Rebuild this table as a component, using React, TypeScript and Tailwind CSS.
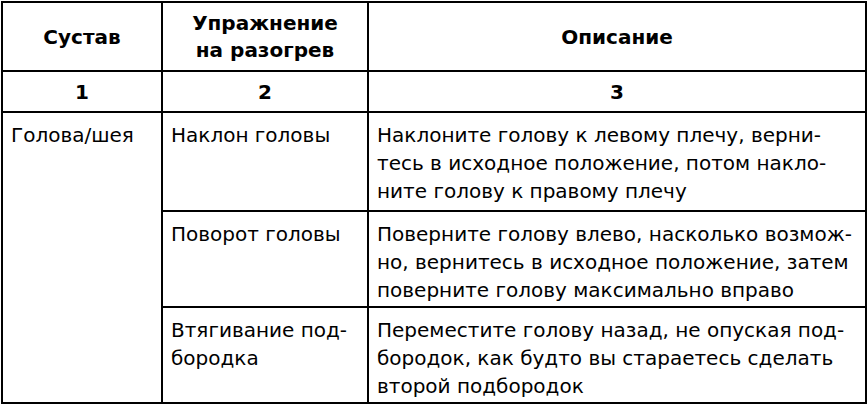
const rows = [
  {
    name: ["Наклон головы"],
    desc: [
      "Наклоните голову к левому плечу, верни-",
      "тесь в исходное положение, потом накло-",
      "ните голову к правому плечу",
    ],
  },
  {
    name: ["Поворот головы"],
    desc: [
      "Поверните голову влево, насколько возмож-",
      "но, вернитесь в исходное положение, затем",
      "поверните голову максимально вправо",
    ],
  },
  {
    name: ["Втягивание под-", "бородка"],
    desc: [
      "Переместите голову назад, не опуская под-",
      "бородок, как будто вы стараетесь сделать",
      "второй подбородок",
    ],
  },
];

function Lines({ lines }: { lines: string[] }) {
  return (
    <>
      {lines.map((line, i) => (
        <div key={i} className="whitespace-nowrap">
          {line}
        </div>
      ))}
    </>
  );
}

const cell = "border-2 border-black";

export default function App() {
  return (
    <div
      className="w-[867px] h-[404px] bg-white text-black overflow-hidden pl-px pt-px"
      style={{ fontFamily: '"DejaVu Sans", sans-serif' }}
    >
      <table className="table-fixed border-collapse w-[864px] text-[20px] leading-[28px]">
        <colgroup>
          <col className="w-[160px]" />
          <col className="w-[206px]" />
          <col className="w-[498px]" />
        </colgroup>
        <thead>
          <tr className="h-[69px] text-center">
            <th className={`${cell} font-bold`}>Сустав</th>
            <th className={`${cell} font-bold leading-[27px]`}>
              Упражнение
              <br />
              на разогрев
            </th>
            <th className={`${cell} font-bold`}>Описание</th>
          </tr>
          <tr className="h-[41px] text-center">
            <th className={`${cell} font-bold`}>1</th>
            <th className={`${cell} font-bold`}>2</th>
            <th className={`${cell} font-bold`}>3</th>
          </tr>
        </thead>
        <tbody>
          {rows.map((row, i) => (
            <tr key={i} className={`align-top ${i === 0 ? "h-[99px]" : "h-[96px]"}`}>
              {i === 0 && (
                <td rowSpan={3} className={`${cell} pl-2 pt-2`}>
                  Голова/шея
                </td>
              )}
              <td className={`${cell} pl-2 pt-2`}>
                <Lines lines={row.name} />
              </td>
              <td className={`${cell} pl-2 pt-2`}>
                <Lines lines={row.desc} />
              </td>
            </tr>
          ))}
        </tbody>
      </table>
    </div>
  );
}
